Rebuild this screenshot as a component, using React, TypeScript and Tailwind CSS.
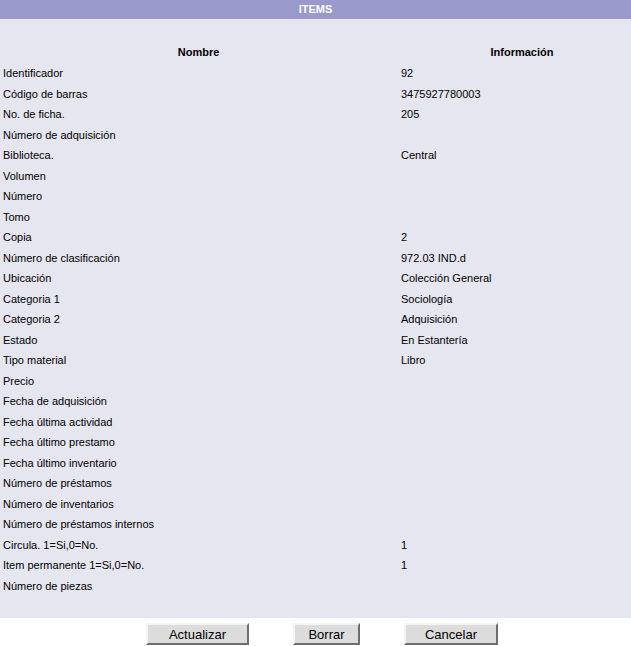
const ROWS: [string, string][] = [
  ["Identificador", "92"],
  ["Código de barras", "3475927780003"],
  ["No. de ficha.", "205"],
  ["Número de adquisición", ""],
  ["Biblioteca.", "Central"],
  ["Volumen", ""],
  ["Número", ""],
  ["Tomo", ""],
  ["Copia", "2"],
  ["Número de clasificación", "972.03 IND.d"],
  ["Ubicación", "Colección General"],
  ["Categoria 1", "Sociología"],
  ["Categoria 2", "Adquisición"],
  ["Estado", "En Estantería"],
  ["Tipo material", "Libro"],
  ["Precio", ""],
  ["Fecha de adquisición", ""],
  ["Fecha última actividad", ""],
  ["Fecha último prestamo", ""],
  ["Fecha último inventario", ""],
  ["Número de préstamos", ""],
  ["Número de inventarios", ""],
  ["Número de préstamos internos", ""],
  ["Circula. 1=Si,0=No.", "1"],
  ["Item permanente 1=Si,0=No.", "1"],
  ["Número de piezas", ""],
];

function Btn({ label, w }: { label: string; w: string }) {
  return (
    <button
      type="button"
      className={`${w} h-[22px] bg-[#dcdcdc] border-2 border-t-[#f4f4f4] border-l-[#f4f4f4] border-r-[#6e6e6e] border-b-[#6e6e6e] text-[13px] text-black leading-none`}
    >
      {label}
    </button>
  );
}

export default function App() {
  return (
    <div className="w-[631px] h-[646px] bg-white text-black font-['Liberation_Sans',Arial,sans-serif] text-[11px] overflow-hidden">
      <div className="h-[19px] bg-[#9999cc] text-white font-bold text-center leading-[19px]">ITEMS</div>
      <div className="bg-[#e6e6f0] pt-[23px] pb-[22px]">
        <div className="grid grid-cols-[397px_1fr]">
          <div className="h-[21px] leading-[21px] font-bold text-center">Nombre</div>
          <div className="h-[21px] leading-[21px] font-bold text-center pl-[16px]">Información</div>
          {ROWS.map(([k, v], i) => (
            <div key={i} className="contents">
              <div className="h-[20.5px] leading-[20.5px] pl-[3px] whitespace-nowrap">{k}</div>
              <div className="h-[20.5px] leading-[20.5px] pl-[4px] whitespace-nowrap">{v}</div>
            </div>
          ))}
        </div>
      </div>
      <div className="flex pt-[5px]">
        <div className="ml-[146px]"><Btn label="Actualizar" w="w-[103px]" /></div>
        <div className="ml-[44px]"><Btn label="Borrar" w="w-[67px]" /></div>
        <div className="ml-[44px]"><Btn label="Cancelar" w="w-[94px]" /></div>
      </div>
    </div>
  );
}
